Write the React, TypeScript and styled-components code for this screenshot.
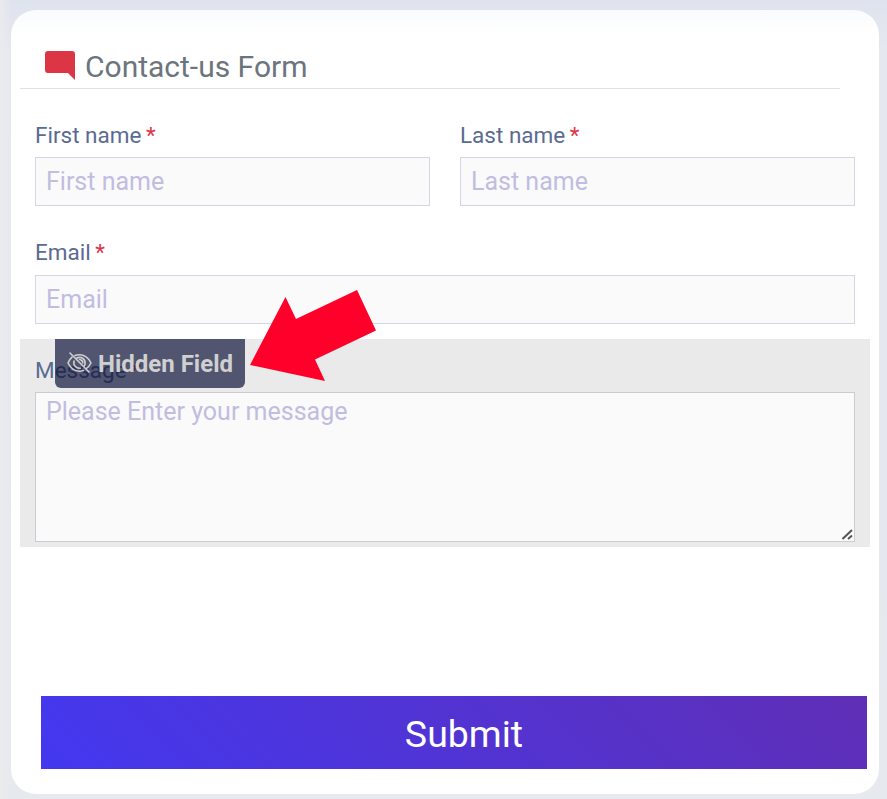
import React from "react";
import styled, { createGlobalStyle, css } from "styled-components";

const GlobalStyle = createGlobalStyle`
  *, *::before, *::after { box-sizing: border-box; }
  html, body { margin: 0; padding: 0; overflow: hidden; }
  body { font-family: Roboto, "Liberation Sans", sans-serif; background: #e6e8ee; }
`;

const Page = styled.main`
  height: 799px;
  padding: 10px 8px 5px 11px;
  background:
    linear-gradient(90deg, rgba(236, 236, 238, 0.8), rgba(236, 236, 238, 0) 11px),
    linear-gradient(180deg, #dfe3ee 0, #e5e8ee 50px, #e6e9ee 100%);
`;

const Card = styled.form`
  display: flex;
  flex-direction: column;
  height: 784px;
  padding: 34px 9px 25px;
  border-radius: 25px;
  background: linear-gradient(180deg, #fafbfe 0, #ffffff 26px);
`;

const Header = styled.header`
  display: flex;
  align-items: flex-start;
  width: 820px;
  height: 45px;
  padding-left: 25px;
  border-bottom: 1px solid #dee2e6;
`;

const HeaderIcon = styled.svg`
  width: 30px;
  height: 29px;
  margin: 7px 10px 0 0;
`;

const Title = styled.h1`
  margin: 0;
  font-size: 30px;
  font-weight: 400;
  line-height: 45px;
  color: #6c757d;
`;

const Row = styled.div<{ $top: number }>`
  display: flex;
  gap: 30px;
  padding: 0 15px;
  margin-top: ${(p) => p.$top}px;
`;

const Field = styled.div`
  display: flex;
  flex: 1;
  flex-direction: column;
  min-width: 0;
`;

const Label = styled.label<{ $height?: number }>`
  height: ${(p) => p.$height ?? 34}px;
  font-size: 22.5px;
  line-height: 34px;
  color: #5a6b91;
`;

const Required = styled.span`
  margin-left: -1px;
  color: #dc3545;
`;

const control = css`
  display: block;
  width: 100%;
  margin: 0;
  border: 1px solid #d6d6e3;
  border-radius: 0;
  outline: 0;
  background: #fafafa;
  font-family: inherit;
  font-size: 25px;
  color: #333;
  &::placeholder { color: #c1bde0; opacity: 1; }
`;

const Input = styled.input`
  ${control}
  height: 49px;
  margin-top: 5px;
  padding: 0 10px 1px;
`;

const HiddenSection = styled.section`
  position: relative;
  width: 850px;
  height: 208px;
  margin-top: 15px;
  padding: 14px 15px 5px;
  background: #eaeaea;
`;

const TextBox = styled.div`
  position: relative;
  margin-top: 5px;
`;

const TextArea = styled.textarea`
  ${control}
  height: 150px;
  padding: 4px 10px;
  border-color: #cbcbd4;
  line-height: 30px;
  resize: none;
`;

const Grip = styled.svg`
  position: absolute;
  right: 2px;
  bottom: 2px;
  width: 11px;
  height: 11px;
`;

const Badge = styled.div`
  position: absolute;
  top: 0;
  left: 35px;
  display: flex;
  align-items: center;
  width: 190px;
  height: 49px;
  padding-left: 12px;
  border-radius: 0 0 6px 6px;
  background: rgba(12, 17, 56, 0.69);
  font-size: 24px;
  font-weight: 700;
  color: #d0d0d0;
  white-space: nowrap;
`;

const EyeIcon = styled.svg`
  width: 25px;
  height: 22px;
  margin: 0 6px 2px 0;
`;

const Pointer = styled.svg`
  position: absolute;
  top: -50px;
  left: 229px;
  width: 129px;
  height: 94px;
`;

const Submit = styled.button`
  width: 826px;
  height: 73px;
  margin: auto 0 0 21px;
  padding: 3px 0 0 20px;
  border: 0;
  background: linear-gradient(45deg, #4338f0, #602fb6);
  font-family: inherit;
  font-size: 37.5px;
  line-height: 70px;
  color: #fff;
`;

function TextField({ label }: { label: string }) {
  return (
    <Field>
      <Label>{label} <Required>*</Required></Label>
      <Input placeholder={label} aria-label={label} />
    </Field>
  );
}

export default function App() {
  return (
    <>
      <GlobalStyle />
      <Page>
        <Card>
          <Header>
            <HeaderIcon viewBox="0 0 30 29" fill="#dc3545">
              <path d="M3 0H27Q30 0 30 3V29L23 22H3Q0 22 0 19V3Q0 0 3 0Z" />
            </HeaderIcon>
            <Title>Contact-us Form</Title>
          </Header>
          <Row $top={29}>
            <TextField label="First name" />
            <TextField label="Last name" />
          </Row>
          <Row $top={29}>
            <Field>
              <Label $height={35}>Email <Required>*</Required></Label>
              <Input placeholder="Email" aria-label="Email" />
            </Field>
          </Row>
          <HiddenSection>
            <Field>
              <Label>Message <Required>*</Required></Label>
              <TextBox>
                <TextArea placeholder="Please Enter your message" aria-label="Message" />
                <Grip viewBox="0 0 11 11" fill="none" stroke="#555" strokeWidth="2">
                  <path d="M0.5 10 10 1M6 10 10 6.5" />
                </Grip>
              </TextBox>
            </Field>
            <Badge>
              <EyeIcon viewBox="0 0 25 22" fill="none" stroke="#d0d0d0" strokeWidth="1.6" strokeLinecap="round" strokeLinejoin="round">
                <path d="M3 1 22 20" />
                <path d="M8 3.6Q10 2.8 12.5 2.8C17.5 2.8 21.5 6 24 11Q22.2 14.5 19.5 16.4" />
                <path d="M5 5.2Q2.6 7.3 1 11C3.5 16 7.5 19.2 12.5 19.2Q14.5 19.2 16.3 18.5" />
                <path d="M9.5 6.2C14 3.8 18.5 7 18.1 11.5Q18 12.8 17.4 13.8" />
                <path d="M7.1 9C5.8 13 9 16.8 13.4 16.2" />
                <path d="M12.5 7.5Q15.7 7.8 15.8 11" />
              </EyeIcon>
              Hidden Field
            </Badge>
            <Pointer viewBox="249 289 129 94">
              <path fill="#ff002b" d="M250 365 285.5 297 296 319 357 290 376 330.5 315 359.5 325 381Z" />
            </Pointer>
          </HiddenSection>
          <Submit type="button">Submit</Submit>
        </Card>
      </Page>
    </>
  );
}
